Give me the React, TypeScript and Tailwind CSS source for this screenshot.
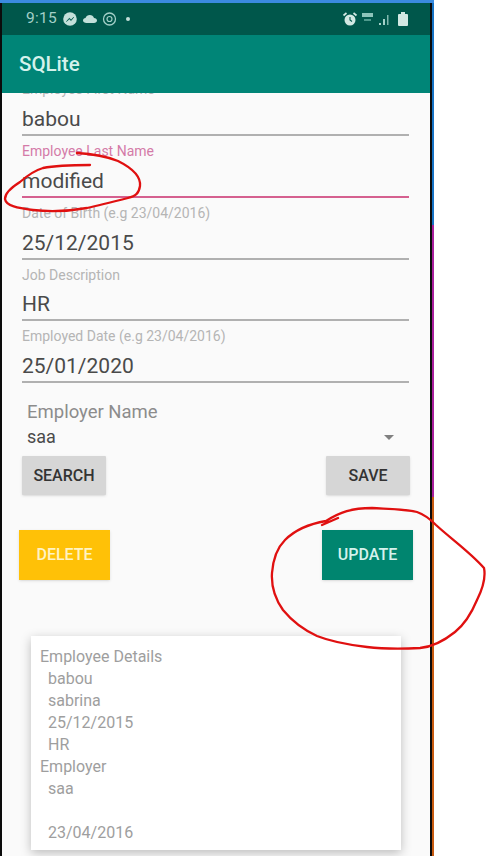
function StatusIcons() {
  return (
    <div className="flex flex-1 items-center justify-between pl-[24px] pr-[22px] text-[#a3d0c8]">
      <div className="flex items-center">
        <span className="text-[15.500px] tracking-[0.3px]">9:15</span>
        <svg width="72" height="16" viewBox="0 0 72 16" className="ml-[6px]">
          {/* messenger */}
          <circle cx="7" cy="8" r="6.800" fill="#c3e0da" />
          <path d="M3.500 10.500l2.800-3.300 1.800 1.600 2.600-2.600-2.600 3.400-1.800-1.600z" fill="#00574b" stroke="#00574b" strokeWidth="0.600" />
          {/* cloud */}
          <path d="M23.500 12c-2 0-3.500-1-3.500-2.500 0-1.300 1.100-2.300 2.500-2.400.6-1.900 2.300-3.100 4.300-3.100 2 0 3.700 1.300 4.200 3.100 1.600.1 3 1 3 2.400 0 1.500-1.400 2.500-3 2.500z" fill="#c3e0da" />
          {/* at sign */}
          <circle cx="46.500" cy="8" r="6" fill="none" stroke="#a3d0c8" strokeWidth="1.300" />
          <circle cx="46.500" cy="8" r="2.500" fill="none" stroke="#a3d0c8" strokeWidth="1.200" />
          <circle cx="65" cy="8" r="2" fill="#c3e0da" />
        </svg>
      </div>
      <svg width="66" height="16" viewBox="0 0 66 16">
        {/* alarm */}
        <circle cx="8" cy="9" r="5.500" fill="#d2e8e3" />
        <path d="M8 6v3l2 1.500" stroke="#00574b" strokeWidth="1.100" fill="none" />
        <path d="M1.500 4.500l3-2.500M14.500 4.500l-3-2.500" stroke="#d2e8e3" strokeWidth="1.700" />
        {/* lte */}
        <rect x="20" y="2" width="11" height="4" fill="#8cc4ba" />
        <rect x="22" y="8" width="7" height="2" fill="#4f9a8d" />
        {/* signal */}
        <rect x="37" y="12" width="2" height="2" fill="#a3d0c8" />
        <rect x="41" y="8" width="2" height="6" fill="#a3d0c8" />
        <rect x="45" y="4" width="1.500" height="10" fill="#7fb8ad" />
        {/* battery */}
        <rect x="56" y="3" width="10" height="12" rx="1" fill="#d2e8e3" />
        <rect x="59" y="1" width="4" height="2" fill="#d2e8e3" />
      </svg>
    </div>
  );
}

function Field({ label, value, focused, first, tight }: { label: string; value: string; focused?: boolean; first?: boolean; tight?: boolean }) {
  return (
    <div className={`pl-[20px] pr-[21px] pt-[7px] ${first ? "-mt-[19px]" : ""}`}>
      <div className={`h-[16px] text-[14px] leading-[16px] ${focused ? "text-[#d47aa8]" : "text-[#b5b5b5]"}`}>{label}</div>
      <div className={`border-b-2 text-[21px] leading-[31px] text-[#4a4a4a] ${tight ? "h-[38px] pt-[6px]" : "h-[39px] pt-[7px]"} ${focused ? "border-[#d5608f]" : "border-[#b0b0b0]"}`}>
        {value}
      </div>
    </div>
  );
}

export default function App() {
  return (
    <div className="relative h-[856px] w-[486px] overflow-hidden bg-white" style={{ fontFamily: "Roboto, sans-serif" }}>
      <div className="h-[3px] w-[434px] bg-[#3b8be0]" />
      <div className="flex h-[853px]">
        <div className="flex w-[432px] flex-col border-x-2 border-[#0b0b0b] bg-[#fafafa]">
          <div className="flex h-[32px] shrink-0 bg-[#00574b]">
            <StatusIcons />
          </div>
          <div className="flex h-[58px] shrink-0 items-center bg-[#008577] pl-[17px] text-[20.500px] font-medium text-[#d5f2ec]">
            SQLite
          </div>
          <div className="flex-1 overflow-hidden">
            <Field first label="Employee First Name" value="babou" />
            <Field focused label="Employee Last Name" value="modified" />
            <Field label="Date of Birth (e.g 23/04/2016)" value="25/12/2015" />
            <Field tight label="Job Description" value="HR" />
            <Field label="Employed Date (e.g 23/04/2016)" value="25/01/2020" />

            <div className="mt-[19px] px-[25px] text-[18.500px] leading-[20px] text-[#8c8c8c]">Employer Name</div>
            <div className="mt-[5px] flex items-center justify-between pl-[25px] pr-[36px] text-[18px] leading-[20px] text-[#4a4a4a]">
              <span>saa</span>
              <span className="h-0 w-0 border-x-[5px] border-t-[5px] border-x-transparent border-t-[#808080]" />
            </div>

            <div className="mt-[9px] flex justify-between px-[20px]">
              <button className="h-[39px] w-[84px] rounded-[1px] bg-[#d6d6d6] text-[16px] font-medium text-[#333333] shadow-sm">SEARCH</button>
              <button className="h-[39px] w-[84px] rounded-[1px] bg-[#d6d6d6] text-[16px] font-medium text-[#333333] shadow-sm">SAVE</button>
            </div>

            <div className="mt-[35px] flex justify-between px-[17px]">
              <button className="h-[50px] w-[91px] bg-[#ffc107] text-[16px] font-medium text-[#fff3c4] shadow-sm">DELETE</button>
              <button className="h-[50px] w-[91px] bg-[#00856f] text-[16px] font-medium text-[#d5f2ec] shadow-sm">UPDATE</button>
            </div>

            <div className="mx-[29px] mt-[56px] h-[214px] w-[370px] bg-white pl-[9px] pt-[10px] text-[16px] leading-[22px] text-[#9e9e9e] shadow-[0_3px_10px_rgba(0,0,0,0.25)]">
              <div>Employee Details</div>
              <div className="pl-[8px]">babou</div>
              <div className="pl-[8px]">sabrina</div>
              <div className="pl-[8px]">25/12/2015</div>
              <div className="pl-[8px]">HR</div>
              <div>Employer</div>
              <div className="pl-[8px]">saa</div>
              <div className="h-[22px]" />
              <div className="pl-[8px]">23/04/2016</div>
            </div>
          </div>
        </div>
        <div className="flex w-[2px] flex-col">
          <div className="h-[222px] bg-[#1672c4]" />
          <div className="h-[272px] bg-[#a81f9c]" />
          <div className="flex-1 bg-[#c75a10]" />
        </div>
      </div>

      {/* pen marks drawn over the screenshot */}
      <svg className="pointer-events-none absolute inset-0" width="486" height="856" viewBox="0 0 486 856" fill="none" stroke="#e01010" strokeWidth="2.300" strokeLinecap="round">
        <path d="M77 153C95 154 108 157 118 161C130 167 141 176 140 186C139 193 136 196 128 198C112 202 100 205 87 208C70 211 50 212 33 210C18 208 6 206 5 199C5 193 12 187 20 182C28 175 36 170 43 168C58 165 75 165 90 165" />
        <path d="M322 525L338 518M326 521C340 512 352 508 372 508C390 509 405 509 417 512C426 515 431 520 436 525C450 538 470 552 484 568C486 578 482 590 477 600C472 612 465 624 455 632C445 640 432 647 420 648C400 649 384 649 367 647C350 645 332 642 317 636C304 630 292 621 283 610C276 600 271 588 272 573C273 560 277 548 285 540C295 530 308 524 326 521" />
      </svg>
    </div>
  );
}
